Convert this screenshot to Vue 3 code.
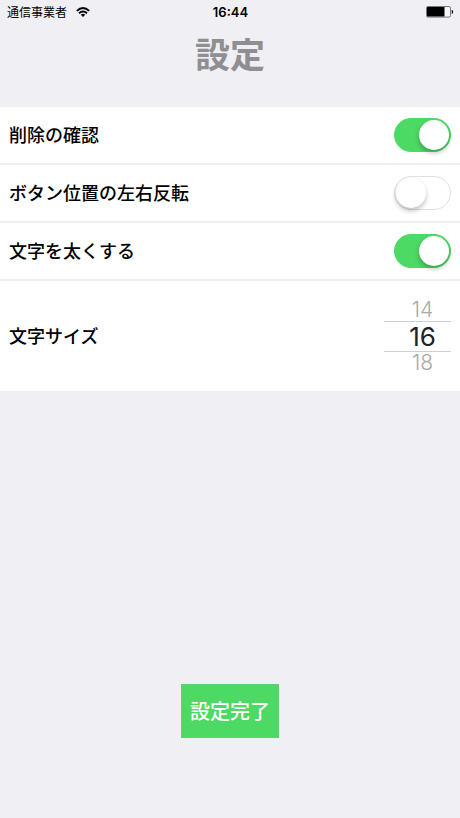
<template>
  <div class="screen">
    <div class="status-bar">
      <div class="carrier">
        <span>通信事業者</span>
        <svg class="wifi" viewBox="0 0 14 10" width="14" height="10" aria-hidden="true">
          <path d="M0.8 3.9 Q7 -1.8 13.2 3.9" fill="none" stroke="#000" stroke-width="1.9" />
          <path d="M3 6.3 Q7 2.8 11 6.3" fill="none" stroke="#000" stroke-width="1.9" />
          <path d="M4.8 7.8 Q7 5.9 9.2 7.8 L7 10 Z" fill="#000" />
        </svg>
      </div>
      <span class="clock">16:44</span>
      <svg class="battery" viewBox="0 0 28 12" width="28" height="12" aria-hidden="true">
        <rect x="0.5" y="0.5" width="24" height="10.6" rx="1.5" fill="#f6f6f8" stroke="#777" />
        <rect x="1" y="1" width="17.5" height="9.6" rx="0.5" fill="#000" />
        <path d="M26 4 Q28 5.8 26 7.6 Z" fill="#000" stroke="#000" stroke-width="0.5" />
      </svg>
    </div>

    <h1 class="title">設定</h1>

    <div class="list">
      <div v-for="item in switches" :key="item.id" class="row">
        <label class="row-label" :for="item.id">{{ item.label }}</label>
        <input :id="item.id" v-model="item.on" class="switch" type="checkbox" role="switch" />
      </div>
      <div class="row row-picker">
        <span id="size-label" class="row-label">文字サイズ</span>
        <div class="picker" role="radiogroup" aria-labelledby="size-label">
          <label
            v-for="size in visibleSizes"
            :key="size"
            class="option"
            :class="{ selected: size === fontSize }"
          >
            <input v-model="fontSize" type="radio" name="size" :value="size" />
            {{ size }}
          </label>
        </div>
      </div>
    </div>

    <button class="done" type="button">設定完了</button>
  </div>
</template>

<script setup>
import { ref, computed } from 'vue'

const switches = ref([
  { id: 'confirm', label: '削除の確認', on: true },
  { id: 'flip', label: 'ボタン位置の左右反転', on: false },
  { id: 'bold', label: '文字を太くする', on: true }
])

const fontSize = ref(16)

// 選択中のサイズと前後だけ表示する
const visibleSizes = computed(() => [fontSize.value - 2, fontSize.value, fontSize.value + 2])
</script>

<style>
body {
  margin: 0;
  background-color: #efeff4;
}
</style>

<style scoped>
.screen {
  display: flex;
  flex-direction: column;
  box-sizing: border-box;
  min-height: 100vh;
  padding-bottom: 80px;
  background-color: #efeff4;
  color: #000;
  font-family: Inter, "Noto Sans CJK JP", sans-serif;
}

.status-bar {
  display: grid;
  grid-template-columns: 1fr auto 1fr;
  align-items: center;
  height: 24px;
  padding: 0 6px 0 7px;
}

.carrier {
  display: flex;
  align-items: center;
  gap: 9px;
  font-size: 12px;
  line-height: 22px;
}

.carrier span {
  padding-top: 2px;
}

.clock {
  font-size: 13px;
  font-weight: 600;
  line-height: 24px;
}

.battery {
  justify-self: end;
}

.title {
  margin: 0;
  height: 83px;
  color: #8e8e93;
  font-size: 35px;
  font-weight: 700;
  line-height: 62px;
  text-align: center;
}

.list {
  display: flex;
  flex-direction: column;
  gap: 2px;
}

.row {
  display: flex;
  align-items: center;
  justify-content: space-between;
  height: 56px;
  padding: 0 9px;
  background-color: #fff;
}

.row-picker {
  height: 110px;
}

.row-label {
  padding-top: 2px;
  font-size: 18px;
  font-weight: 500;
  line-height: 24px;
}

.switch {
  appearance: none;
  box-sizing: border-box;
  width: 57px;
  height: 34px;
  margin: 0;
  padding: 1px;
  border: 1px solid #e0e0e2;
  border-radius: 17px;
  background-color: #fff;
  cursor: pointer;
}

.switch::before {
  content: "";
  display: block;
  width: 30px;
  height: 30px;
  border-radius: 50%;
  background-color: #fff;
  box-shadow: 0 3px 5px rgba(0, 0, 0, 0.25);
}

.switch:checked {
  border-color: #4cd964;
  background-color: #4cd964;
}

.switch:checked::before {
  margin-left: auto;
}

.picker {
  display: flex;
  flex-direction: column;
  width: 67px;
}

.option {
  padding-left: 10px;
  color: #aaa;
  font-size: 21px;
  font-weight: 300;
  line-height: 22px;
  text-align: center;
  cursor: pointer;
}

.option.selected {
  border-top: 1px solid #cfcfcf;
  border-bottom: 1px solid #cfcfcf;
  color: #222;
  font-size: 26px;
  font-weight: 400;
  line-height: 29px;
}

.option input {
  position: absolute;
  margin: 0;
  opacity: 0;
  pointer-events: none;
}

.done {
  align-self: center;
  margin-top: auto;
  padding: 13px 8px 11px;
  border: 1px solid #62cf78;
  background-color: #4cd964;
  color: #fff;
  font-family: inherit;
  font-size: 20px;
  font-weight: 500;
  line-height: 28px;
  cursor: pointer;
}
</style>
